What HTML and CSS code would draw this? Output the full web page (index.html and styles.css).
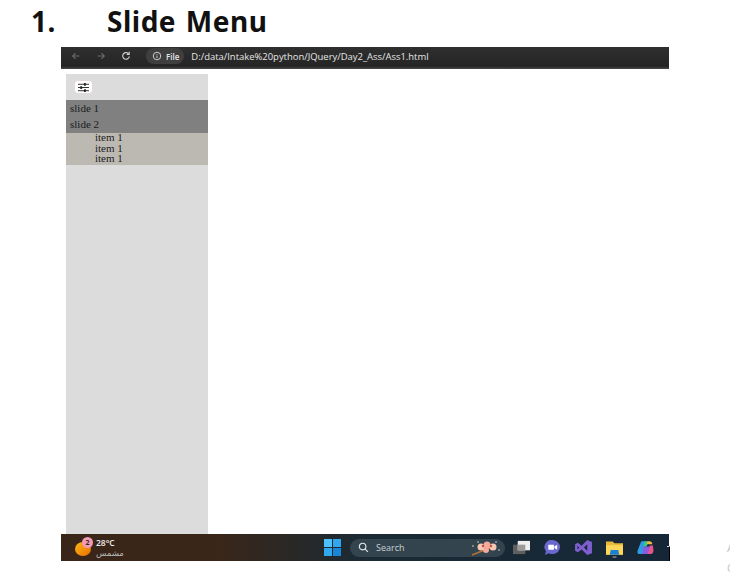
FILE: index.html
```html
<!DOCTYPE html>
<html lang="en">
<head>
<meta charset="utf-8">
<title>Slide Menu</title>
<link rel="stylesheet" href="styles.css">
</head>
<body>
<h1 class="title"><span class="num">1.</span><span>Slide Menu</span></h1>
<div class="shot">
  <div class="screen">
    <div class="toolbar">
      <svg class="nav dim" viewBox="0 0 12 12"><path d="M10 6H2M5.5 2.500 2 6l3.500 3.500"/></svg>
      <svg class="nav dim" viewBox="0 0 12 12"><path d="M2 6h8M6.500 2.500 10 6 6.500 9.500"/></svg>
      <svg class="nav" viewBox="0 0 12 12"><path d="M10 6.500A4 4 0 1 1 8.800 3M9.800 1v3h-3"/></svg>
      <div class="chip">
        <svg class="info" viewBox="0 0 12 12"><circle cx="6" cy="6" r="4.500"/><path d="M6 5.500v3M6 3.500v1"/></svg>
        <span>File</span>
      </div>
      <span class="url">D:/data/Intake%20python/JQuery/Day2_Ass/Ass1.html</span>
    </div>
    <div class="page">
      <aside class="side">
        <div class="side-head">
          <button class="toggle" type="button" aria-label="Toggle menu">
            <svg viewBox="0 0 14 12"><path d="M1 2.500h12M1 6h12M1 9.500h12"/><path class="knob" d="M8.500 1v3M4.500 4.500v3M8.500 8v3"/></svg>
          </button>
        </div>
        <div class="slide">slide 1</div>
        <div class="slide">slide 2</div>
        <ul class="items">
          <li>item 1</li>
          <li>item 1</li>
          <li>item 1</li>
        </ul>
      </aside>
    </div>
    <div class="taskbar">
      <div class="weather">
        <span class="sun"><span class="badge">2</span></span>
        <div class="wtext"><span class="temp">28°C</span><span class="cond" lang="ar" dir="rtl">مشمس</span></div>
      </div>
      <div class="center">
        <svg class="win" viewBox="0 0 17 17"><path class="w1" d="M0 0h8v8H0z"/><path class="w2" d="M9 0h8v8H9z"/><path class="w2" d="M0 9h8v8H0z"/><path class="w3" d="M9 9h8v8H9z"/></svg>
        <div class="search">
          <svg class="lens" viewBox="0 0 12 12"><circle cx="5" cy="5" r="3.600"/><path d="m7.800 7.800 3 3"/></svg>
          <span>Search</span>
          <svg class="blossom" viewBox="0 0 34 16">
            <path class="branch" d="M3 15 13 11l8-3"/>
            <circle class="p1" cx="12" cy="7" r="3.500"/><circle class="p2" cx="18" cy="5" r="3.500"/><circle class="p1" cx="24" cy="7" r="3.500"/><circle class="p2" cx="17" cy="10" r="3"/><circle class="p3" cx="14" cy="6" r="1.200"/><circle class="p3" cx="22" cy="6" r="1.200"/><circle class="dot" cx="4" cy="6" r=".8"/><circle class="dot" cx="30" cy="10" r=".8"/><circle class="dot" cx="27" cy="2" r=".8"/><circle class="dot" cx="9" cy="2" r=".8"/>
          </svg>
        </div>
        <svg class="app" viewBox="0 0 18 14"><path class="tv1" d="M0 4h13v10H0z"/><path class="tv2" d="M5 0h13v10H5z"/><path class="tv3" d="M5 4h8v6H5z"/></svg>
        <svg class="app" viewBox="0 0 18 16"><path class="meet" d="M9 0a8 7.500 0 1 1-4 14L1 16l1-4A8 7.500 0 0 1 9 0z"/><path class="wh" d="M4.500 5h6v5.500h-6zM11 7l3-2v5.500l-3-2z"/></svg>
        <svg class="app" viewBox="0 0 18 16"><path class="vs" d="M13 0l5 2v12l-5 2-6-6-4 3-3-1.500v-7L3 3l4 3zM13 4.500 9.500 8 13 11.500zM2.500 6v4L4.500 8z"/></svg>
        <svg class="app tall" viewBox="0 0 18 18"><path class="f1" d="M0 1h7l2 2h9v12H0z"/><path class="f2" d="M0 5h18v10H0z"/><path class="f3" d="M5 10h8l1 5H4z"/><path class="f4" d="M7 17h4v1H7z"/></svg>
        <svg class="app" viewBox="0 0 16 14"><path class="c1" d="M4 1h5L6 13H2Q0 13 .500 10z"/><path class="c2" d="M7 1h4l-2 5H6z"/><path class="c3" d="M9 13h4q2 0 2.500-3L15 5h-3z"/><path class="c4" d="M10 1h2q2 0 2.500 3H9z"/><path class="c5" d="M6 6h6l-2 7H5z"/></svg>
      </div>
      <span class="tick"></span>
    </div>
  </div>
</div>
<div class="activate"><span>A</span><span>C</span></div>
</body>
</html>
```

FILE: styles.css
```css
html, body { margin: 0; padding: 0; background: #fff; }
body { height: 579px; overflow: hidden; position: relative; font-family: "Open Sans", "Liberation Sans", sans-serif; }

.title {
  margin: 0;
  height: 47px;
  padding: 4px 0 0 31px;
  box-sizing: border-box;
  display: flex;
  font-size: 28px;
  line-height: 34px;
  font-weight: 700;
  color: #111;
  letter-spacing: .5px;
  word-spacing: 2px;
  font-family: "Noto Sans", "Open Sans", sans-serif;
}
.title span { display: block; }
.num { width: 76px; }

.shot { padding-left: 61px; }
.screen { width: 608px; height: 514px; display: flex; flex-direction: column; background: #fff; }

.toolbar {
  height: 22px;
  box-sizing: border-box;
  display: flex;
  align-items: center;
  background: linear-gradient(#2f2f2f, #252525 88%, #4a4a4a);
  padding: 0 0 4px 10px;
  color: #e6e6e6;
}
.nav { width: 10px; height: 10px; margin-right: 15px; fill: none; stroke: #cfcfcf; stroke-width: 1.300; }
.nav.dim { stroke: #6a6a6a; }
.chip {
  height: 16px;
  padding: 0 5px 0 6px;
  display: flex;
  align-items: center;
  gap: 4px;
  border-radius: 8px;
  background: #3f3f3f;
  font-size: 8px;
  font-weight: 600;
}
.info { width: 10px; height: 10px; fill: none; stroke: #e6e6e6; stroke-width: 1; }
.url { margin-left: 7px; font-size: 9.450px; white-space: nowrap; font-family: "Open Sans", sans-serif; }

.page { flex: 1; min-height: 0; padding: 5px 0 0 5px; display: flex; }
.side { width: 142px; background: #dcdcdc; font-family: "Liberation Serif", serif; font-size: 11px; color: #1c1c1c; }
.side-head { height: 26px; box-sizing: border-box; padding: 6px 0 0 8px; }
.toggle {
  display: flex;
  align-items: center;
  justify-content: center;
  width: 19px;
  height: 14px;
  padding: 0;
  border: 1px solid #e4d8d8;
  border-radius: 4px;
  background: #fff;
}
.toggle svg { width: 13px; height: 11px; fill: none; stroke: #222; stroke-width: 1; }
.toggle .knob { stroke-width: 2; }
.slide { height: 16.500px; line-height: 16.500px; padding-left: 4px; background: #808080; }
.slide + .slide { line-height: 15.500px; }
.items { display: flow-root; margin: 0; padding: 0 0 0 29px; list-style: none; background: #bcb9b3; height: 31.500px; line-height: 10.500px; }
.items li:first-child { margin-top: -1px; }

.taskbar {
  height: 27px;
  display: flex;
  align-items: center;
  position: relative;
  background: linear-gradient(90deg, #3a2519 0, #3a2618 25%, #1b2a34 50%, #152737 100%);
  color: #eee;
}
.weather { display: flex; align-items: center; padding-left: 14px; width: 240px; box-sizing: border-box; }
.sun {
  position: relative;
  width: 16px;
  height: 14px;
  margin-top: 2px;
  border-radius: 50%;
  background: linear-gradient(135deg, #fdb515, #e86f00);
}
.badge {
  position: absolute;
  top: -5px;
  right: -2px;
  width: 11px;
  height: 11px;
  border-radius: 50%;
  background: #f49ab4;
  color: #3a2518;
  font-size: 7px;
  font-weight: 700;
  line-height: 11px;
  text-align: center;
}
.wtext { display: flex; flex-direction: column; margin-left: 5px; line-height: 10px; }
.temp { font-size: 8.500px; font-weight: 600; }
.cond { font-size: 8.500px; color: #bbb; font-family: "DejaVu Sans", sans-serif; }

.center { position: absolute; left: 263px; top: 0; height: 27px; display: flex; align-items: center; }
.win { width: 17px; height: 17px; margin-right: 9px; }
.w1 { fill: #4cc2ff; }
.w2 { fill: #2fa8ee; }
.w3 { fill: #1687d8; }
.search {
  width: 155px;
  height: 18px;
  box-sizing: border-box;
  padding: 0 2px 0 8px;
  display: flex;
  align-items: center;
  border-radius: 9px;
  background: #34444f;
  font-size: 9px;
  color: #c9d0d4;
}
.lens { width: 11px; height: 11px; margin-right: 7px; fill: none; stroke: #e8e8e8; stroke-width: 1.200; }
.blossom { width: 34px; height: 16px; margin-left: auto; }
.branch { fill: none; stroke: #b0703a; stroke-width: 1.500; }
.p1 { fill: #f6c6b4; }
.p2 { fill: #f4a99a; }
.p3 { fill: #c9443c; }
.dot { fill: #e9d8cf; }
.app { width: 17px; height: 15px; margin-left: 14px; flex: none; }
.search + .app { margin-left: 8px; }
.tall { height: 18px; margin-top: 2px; }
.tv1 { fill: #5f5f5f; }
.tv2 { fill: #eeeeee; }
.tv3 { fill: #9a9a9a; }
.meet { fill: #6a68cf; }
.wh { fill: #fff; }
.vs { fill: #7f5fd0; fill-rule: evenodd; }
.f1 { fill: #e8b93a; }
.f2 { fill: #fbd65a; }
.f3 { fill: #1d7fd0; }
.f4 { fill: #b8bcc0; }
.c1 { fill: #2f9be0; }
.c2 { fill: #37c98a; }
.c3 { fill: #e9548f; }
.c4 { fill: #f2b63a; }
.c5 { fill: #8a5ce0; }
.tick { position: absolute; right: -1px; bottom: 0; width: 3px; height: 15px; border-right: 1px solid #000; border-top: 1px solid #ddd; box-sizing: border-box; }

.activate { position: absolute; left: 727px; top: 538px; display: flex; flex-direction: column; font-size: 11px; line-height: 20px; color: #c4c4c4; font-family: "Open Sans", sans-serif; }
```
